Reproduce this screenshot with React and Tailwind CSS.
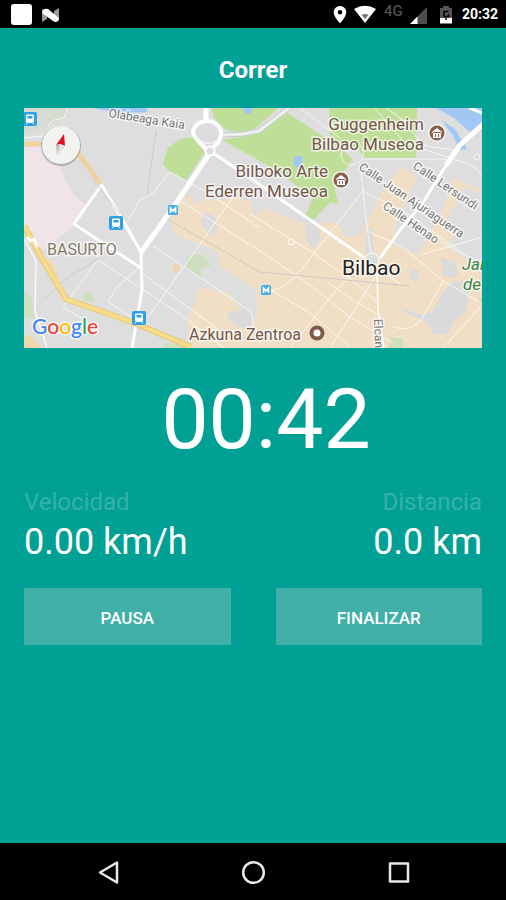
import React from 'react';

function StatusBar() {
  return (
    <header className="flex h-7 items-center bg-black pl-[11px] pr-2 text-white">
      <svg className="h-7 w-[52px]" viewBox="11 0 52 28" aria-hidden="true">
        <rect x="11" y="4" width="21" height="21" rx="3" fill="#fff" />
        <path d="M42 9l5 3v7l-5 3z M59 8v13l-5-3v-7z" fill="#999" />
        <path d="M43 10q2-2 5-1l11 9-1 3q-2 2-5 0l-11-8z" fill="#fff" />
      </svg>
      <svg className="ml-auto h-7 w-[122px]" viewBox="330 0 122 28" aria-label="Estado" role="img">
        <path
          d="M338 6a6.3 6.3 0 0 0-6.3 6.3c0 4.7 6.3 11 6.3 11s6.3-6.3 6.3-11A6.3 6.3 0 0 0 338 6zm0 4a2.3 2.3 0 1 1 0 4.600a2.3 2.3 0 0 1 0-4.600z"
          fill="#fff"
        />
        <path d="M352 9q11-6.500 22 0l-11 14z" fill="#fff" />
        <path d="M359.500 15q3.500-2 7 0l-3.500 4z" fill="#777" />
        <text x="382" y="16" fontSize="15" fontWeight="500" fill="#4d4d4d">4G</text>
        <path d="M425 7v17h-17z" fill="#4d4d4d" />
        <path d="M415.500 16.500v7.500h-7.500z" fill="#fff" />
        <path d="M438 8h3V6h6v2h3v10h-12z" fill="#555" />
        <path d="M438 18h12v5.500h-12z" fill="#fff" />
        <path d="M446.500 11.500h-4.500v5h4.500v-2.500M444 18v2" fill="none" stroke="#000" strokeWidth="1.500" />
      </svg>
      <time className="ml-2 text-[14px] font-bold leading-5">20:32</time>
    </header>
  );
}

function TransitIcon({ x, y }) {
  return (
    <g transform={`translate(${x} ${y})`}>
      <rect x="-7" y="-7" width="14" height="14" rx="2" fill="#2f9fe6" />
      <rect x="-4" y="-4.500" width="8" height="8" rx="1" fill="#fff" />
      <rect x="-2.500" y="-3" width="5" height="2.500" fill="#2f9fe6" />
      <path d="M-4 5.500l1.500-2h5l1.500 2" fill="none" stroke="#fff" />
    </g>
  );
}

function MetroIcon({ x, y }) {
  return (
    <g transform={`translate(${x} ${y})`}>
      <rect x="-5" y="-5" width="10" height="10" rx="1.500" fill="#45aeea" />
      <path d="M-2.500 3v-5l2.500 3 2.500-3v5" fill="none" stroke="#fff" strokeWidth="1.700" />
    </g>
  );
}

function MuseumIcon({ x, y }) {
  return (
    <g transform={`translate(${x} ${y})`}>
      <circle r="9" fill="#fff" opacity="0.700" />
      <circle r="7.500" fill="#875f4c" />
      <path d="M-5 -1l5-4 5 4v1h-10z M-4 0h8v5h-8z" fill="#fff" />
      <path d="M-1.500 1v3M1.500 1v3M-4-.5h8" stroke="#875f4c" />
    </g>
  );
}

function RunMap() {
  return (
    <svg className="block h-auto w-full" viewBox="24 108 458 240" role="img" aria-label="Mapa de Bilbao">
      <rect x="24" y="108" width="458" height="240" fill="#dedede" />

      <g>
        <path d="M24 108h45l-3 10-14 6-9 6-19 6z" fill="#d6dcd1" />
        <path d="M24 148l20-4 14 18 7 18 9 15 12 10-12 20-14 12-15 12-11-2-10-22z" fill="#f1e4e8" />
        <path d="M24 292l8 6 2 22-10-4z M83 293l8 0 4 10-12-3z M163 344l19-1 6 5h-24z" fill="#cfe0bf" />
        <path d="M24 334l9 4 7 10H24z" fill="#f1d6a8" />

        <path
          d="M187 194l10 10 8-5 15 2 13-4 17 4 5 14 10-7 32 14 14 2 14-1 12-1 6 12 7 4 11-4 18-37 22-30 16 10-22 50-2 18 24 9 10-16 16-28 10-32 27 11-16 32-16 24 12 10 14 6 8 18 12 10 6 34v25H192l-5-25 8-22 5-14 14 4 14 2 14 18 12 12 4-14-2-18-18-14-18-11-2-15-22-8-19-7-7-12 4-16z"
          fill="#f1dfc5"
        />
        <path d="M200 222l6-10 8 4 4 6-2 14-8-2z M305 225l12-2 4 16-8 10-7-9z M366 229l6-2 2 24-9 8z" fill="#dadbda" />
        <path d="M227 314l8-4 6 2 1-10 9 8 1 16-10 2-12-6z" fill="#dadbda" />
        <path d="M441 257l14 5 4 12-6 4-10-3z M412 269l8 2-3 10-8-2z" fill="#dadbda" />
        <path d="M401 308l22 7 10-4 10-19 10-10 16-1-2 28-14 14-4 10-14 2-10-14-20-8z" fill="#d9dadb" />
        <path d="M464 187l18 8v54l-16 14-2-12-11-20-5-14z" fill="#dedede" />
        <path d="M187 258l10-4 8 2 6 9-10 4 1 8-10-4-6-6z M391 338h12v10h-14z M478 300l4-3v12z" fill="#cddfbd" />
        <path d="M172 266l6-2 2 6-6 3z" fill="#f0d3a7" />

        <path d="M163 164l5-16 12-9 13-2 12 15-19 29-17-10z" fill="#bfdf98" />
        <path d="M211 108h67l-22 20-16 5-13-3-11-8z" fill="#bfdf98" />
        <path d="M222 140l20-3 18-4 23-23 57 37 12 12-2 6-17 16 5 23-8-2-16 18-9-4 8-18-32-24-28-17z" fill="#bfdf98" />
        <path d="M329 108h88l-1 50-52 0-6-10-16-2-12-8z" fill="#bfdf98" />
        <path d="M294 157l9-1-2 14-8-5z M92 108h54l2 4-28 1z M242 108h11l-3 6-5-1z" fill="#a1c8f5" />
        <path d="M436 108h46v15l-12 9-16-14z M441 120l14 9 12 20-7 1-8-16z" fill="#a1c8f5" />
      </g>

      <g fill="none" stroke="#fff" strokeWidth="1" strokeLinecap="round" strokeLinejoin="round" opacity="0.750">
        <path d="M48 126l6-6 10-2 4-10 M24 138l20-2 M127 222l13-22 13-7 17-21 36 20 54 36 M180 201l80 50 50 34 40 32 43 26" />
        <path d="M153 246l97 65q6 12 1 23 M143 274l77 57 M97 259l83 55 44 34 M100 257l-37 50 24 15 M140 267l-23 20-9 15 25 16" />
        <path d="M233 197l-40 57-45 63 M250 214l57 35 45 31 25 22 M260 284l50 29 40 34 M360 164l7 63 5 34" />
        <path d="M363 191l-63 80q-16 20-33 20 M363 261l-30 33-43 54 M375 277l-25 40-20 31 M363 191l47 24 72 52" />
        <path d="M367 231l36 16 40 34 40 23-40 44 M443 281l-20 36q-8 12-20 12l-10-2 M423 254l60-17 M440 241l24 14 M375 262l14 14 14 10" />
        <path d="M330 284l20 14 27 16 M375 108l30 35 45 15 M386 108l20 14 16 23 36 6 M364 159h80q26 0 38 16 M341 154q3-12 14-11q10 2 8 15q-6 8-14 7q-8-3-8-11z" />
        <path d="M300 108l40 30" />
        <circle cx="477" cy="157" r="3" />
      </g>

      <g fill="none" stroke="#fff" strokeLinecap="round" strokeLinejoin="round">
        <path d="M24 239l12 22-1 50 12 37" strokeWidth="1.500" opacity="0.800" />
        <path d="M223 135l20-1 16-3 30-23" stroke="#c9cec5" strokeWidth="5" />
        <path d="M223 135l20-1 16-3 30-23" stroke="#efefef" strokeWidth="3" />
        <path d="M101 184l24 40 16 28 1 38-10 58 M100 187l-26 37 38 25 29 19" strokeWidth="3" />
        <path d="M209 154l-34 51-33 46" strokeWidth="5" />
        <path d="M213 153l46 31 104 73" strokeWidth="3" />
        <path d="M447 164l-25 40-22 26-19 27" strokeWidth="3" />
        <path d="M482 125l-22 20-13 19" strokeWidth="5" />
        <path d="M377 272l1 38 6 38" strokeWidth="1.500" />
        <path d="M206 108v12" strokeWidth="5" />
        <path d="M470 108l12 5" strokeWidth="3" />
      </g>

      <g fill="none" strokeLinejoin="round">
        <path d="M156 130l-9 65 M92 178l28 36 M100 258l-30 18-25 22 M167 219l93 53 150 14" stroke="#c4c4c4" strokeWidth="1" opacity="0.800" />
        <path d="M24 144h28l24 7 25 33" stroke="#f0d2a0" strokeWidth="5" />
        <path d="M24 226l20 36 22 37 66 23 59 25" stroke="#e5c878" strokeWidth="6" />
        <path d="M24 226l20 36 22 37 66 23 59 25" stroke="#f7dc8c" strokeWidth="4" />
        <path d="M43 258q9 4 12 14l8 20" stroke="#f7dc8c" strokeWidth="2" />
      </g>
      <path
        d="M207 121c-8 0-13 5-14 11c0 4 4 7 7 11l8 8l10-8c2-4 4-8 3-12c-2-6-6-10-14-10z"
        fill="#dcdddc"
        stroke="#fff"
        strokeWidth="4"
      />
      <path d="M199 141q10 5 20-1" fill="none" stroke="#fff" />
      <circle cx="210" cy="151" r="4.500" fill="#dedede" stroke="#fff" strokeWidth="2" />
      <circle cx="291" cy="242" r="3" fill="#f1dfc5" stroke="#fff" />
      <circle cx="372" cy="260" r="7" fill="#dedede" stroke="#fff" />
      <path d="M27 237l3 4 4-2 3 8" fill="none" stroke="#fff" strokeWidth="3" />

      <TransitIcon x={30} y={119} />
      <TransitIcon x={116} y={223} />
      <TransitIcon x={139} y={318} />
      <MetroIcon x={173} y={210} />
      <MetroIcon x={266} y={290} />

      <g stroke="#fff" strokeWidth="3" strokeOpacity="0.700" strokeLinejoin="round" paintOrder="stroke">
        <g fill="#75564b" fontSize="16">
          <text x="424" y="130" textAnchor="end" fontSize="17">Guggenheim</text>
          <text x="424" y="150" textAnchor="end" fontSize="17">Bilbao Museoa</text>
          <text x="328" y="177" textAnchor="end" fontSize="17">Bilboko Arte</text>
          <text x="328" y="197" textAnchor="end" fontSize="17">Ederren Museoa</text>
          <text x="189" y="340">Azkuna Zentroa</text>
        </g>
        <text x="47" y="255" fontSize="16" fill="#85796a">BASURTO</text>
        <text x="342" y="275" fontSize="21" fill="#222">Bilbao</text>
        <g fill="#39833d" fontSize="17" fontStyle="italic">
          <text x="462" y="270">Jar</text>
          <text x="463" y="290">de</text>
        </g>
        <g fill="#757575" fontSize="12">
          <text transform="translate(108 117) rotate(9)">Olabeaga Kaia</text>
          <text transform="translate(358 169) rotate(34)">Calle Juan Ajuriaguerra</text>
          <text transform="translate(412 168) rotate(34)">Calle Lersundi</text>
          <text transform="translate(382 208) rotate(34)">Calle Henao</text>
          <text transform="translate(374 319) rotate(88)">Elcan</text>
        </g>
      </g>

      <MuseumIcon x={437} y={133} />
      <MuseumIcon x={341} y={180} />
      <circle cx="317" cy="333" r="5.500" fill="#fff" stroke="#7c5b4c" strokeWidth="4" />

      <circle cx="61" cy="146" r="20" fill="#777" opacity="0.450" />
      <circle cx="61" cy="145" r="19" fill="#f2f2f0" />
      <path d="M64 134l-8 11 4-1 5 2z" fill="#d8131b" />
      <path d="M56 145l4-1 5 2-8 9z" fill="#b9c1bd" />
      <path d="M60 144l5 2-8 9z" fill="#e1e4e2" />

      <text
        x="32"
        y="334"
        fontSize="21"
        className="font-['Lato',sans-serif] font-medium"
        stroke="#fff"
        strokeWidth="3"
        strokeOpacity="0.700"
        strokeLinejoin="round"
        paintOrder="stroke"
      >
        <tspan fill="#4285f4">G</tspan>
        <tspan fill="#ea4335">o</tspan>
        <tspan fill="#fbbc05">o</tspan>
        <tspan fill="#4285f4">g</tspan>
        <tspan fill="#34a853">l</tspan>
        <tspan fill="#ea4335">e</tspan>
      </text>
    </svg>
  );
}

function Stat({ label, value, className }) {
  return (
    <div className={className}>
      <dt className="text-2xl leading-9 text-[#37b1a6]">{label}</dt>
      <dd className="text-[36px] leading-[44px]">{value}</dd>
    </div>
  );
}

function ActionButton({ children }) {
  return (
    <button type="button" className="h-[57px] bg-[#40b0a8] pt-1 text-[17px] font-medium">
      {children}
    </button>
  );
}

function NavBar() {
  return (
    <nav className="mt-auto flex h-[57px] items-center justify-center gap-[117px] bg-black">
      <button type="button" aria-label="Atrás">
        <svg className="size-7" viewBox="0 0 28 28" fill="none" stroke="#e8e8e8" strokeWidth="2.500" strokeLinejoin="round">
          <path d="M23 4.500v20L6 14.500z" />
        </svg>
      </button>
      <button type="button" aria-label="Inicio">
        <svg className="size-7" viewBox="0 0 28 28" fill="none" stroke="#e8e8e8" strokeWidth="2.500">
          <circle cx="14.500" cy="14.500" r="10.300" />
        </svg>
      </button>
      <button type="button" aria-label="Recientes">
        <svg className="size-7" viewBox="0 0 28 28" fill="none" stroke="#e8e8e8" strokeWidth="2.500" strokeLinejoin="round">
          <path d="M6 5.500h18v18H6z" />
        </svg>
      </button>
    </nav>
  );
}

export default function App() {
  return (
    <div className="flex min-h-screen flex-col bg-[#00a095] font-['Roboto',sans-serif] text-white">
      <StatusBar />
      <main className="px-6 pt-6">
        <h1 className="mb-5 text-center text-2xl font-bold leading-9">Correr</h1>
        <RunMap />
        <p className="mt-7 pl-[26px] text-center text-[84px] leading-[88px]">00:42</p>
        <dl className="mt-5 flex justify-between">
          <Stat label="Velocidad" value="0.00 km/h" />
          <Stat label="Distancia" value="0.0 km" className="text-right" />
        </dl>
        <div className="mt-6 grid grid-cols-2 gap-[45px]">
          <ActionButton>PAUSA</ActionButton>
          <ActionButton>FINALIZAR</ActionButton>
        </div>
      </main>
      <NavBar />
    </div>
  );
}
